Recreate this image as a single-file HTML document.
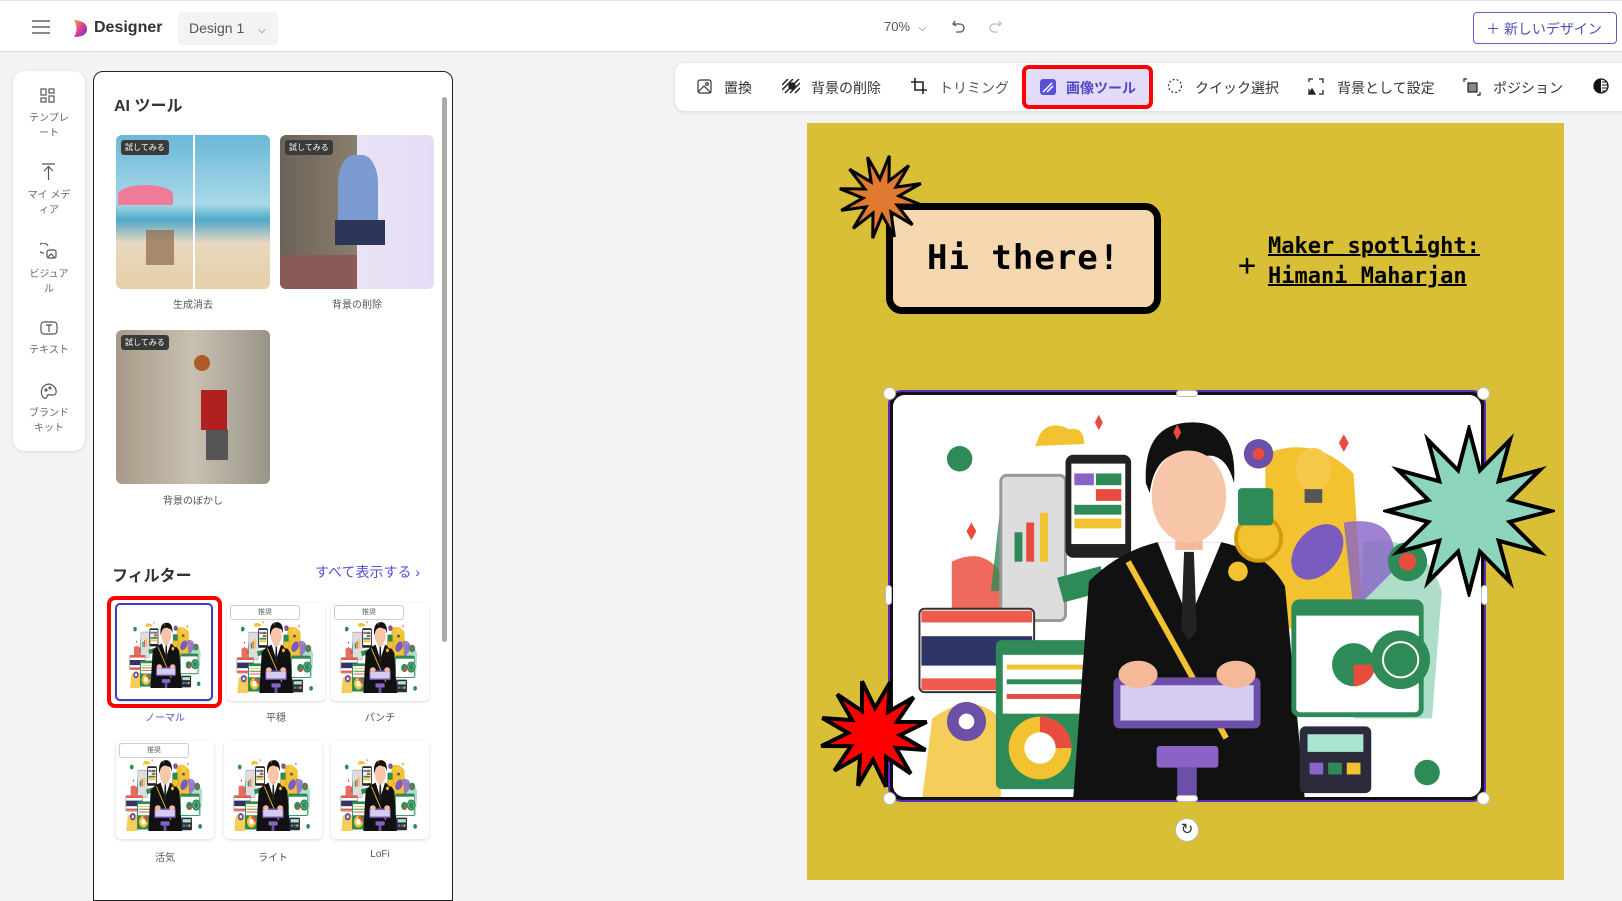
<!DOCTYPE html>
<html><head><meta charset="utf-8">
<style>
*{box-sizing:border-box;margin:0;padding:0}
body{width:1622px;height:896px;overflow:hidden;background:#f3f3f3;font-family:"Liberation Sans","Noto Sans CJK JP",sans-serif;position:relative;color:#333}
.abs{position:absolute}
#top{left:0;top:0;width:1622px;height:52px;background:#fff;border-bottom:1px solid #ddd;border-top:1px solid #e6e6e6}
.tb{position:absolute;top:63px;left:675px;width:960px;height:48px;background:#fff;border-radius:10px;box-shadow:0 1px 4px rgba(0,0,0,.12)}
.ti{position:absolute;top:78px;font-size:14px;color:#333;white-space:nowrap}
.side{left:13px;top:71px;width:72px;height:380px;background:#fff;border-radius:12px;box-shadow:0 1px 4px rgba(0,0,0,.1)}
.sl{position:absolute;width:72px;text-align:center;font-size:10px;color:#666;line-height:15px}
.panel{left:93px;top:71px;width:360px;height:830px;background:#fff;border:1px solid #222;border-radius:10px 10px 0 0}
.thumb{position:absolute;border-radius:6px;overflow:hidden}
.tag{position:absolute;left:5px;top:5px;background:#3a3a3a;color:#fff;font-size:8px;padding:2px 4px;border-radius:3px}
.cap{position:absolute;font-size:10px;color:#555;text-align:center}
.ft{position:absolute;width:98px;height:98px;background:#fff;border-radius:5px;box-shadow:0 1px 3px rgba(0,0,0,.15);overflow:hidden}
.rec{position:absolute;left:3px;top:2px;width:70px;height:15px;background:#fff;border:1px solid #ccc;border-radius:3px;font-size:7px;text-align:center;color:#666;line-height:13px;z-index:2}
.mono{font-family:"DejaVu Sans Mono","Liberation Mono",monospace;font-weight:bold;color:#000}
.h{position:absolute;width:13px;height:13px;border-radius:50%;background:#fff;border:1px solid #bbb}
</style></head><body>
<svg width="0" height="0" style="position:absolute">
<defs>
<symbol id="ill" viewBox="0 0 600 410" preserveAspectRatio="none">
<rect width="600" height="410" fill="#fff"/>
<path d="M380 60 Q430 40 470 80 L480 240 Q420 260 380 220Z" fill="#f2c230"/>
<path d="M60 170 Q100 150 120 200 L130 260 L60 260Z" fill="#ee6a5c"/>
<path d="M110 110 Q150 90 170 130 L160 200 L100 200Z" fill="#2e8b57" opacity=".8"/>
<path d="M480 150 Q540 140 560 200 L550 330 L470 330Z" fill="#8bd0b4" opacity=".7"/>
<path d="M460 130 Q520 120 510 180 L470 220Z" fill="#8a63c7" opacity=".8"/>
<path d="M40 330 Q80 300 110 330 L110 410 L30 410Z" fill="#f2c230" opacity=".8"/>
<rect x="110" y="82" width="66" height="148" rx="6" fill="#ddd" stroke="#999" stroke-width="3"/>
<rect x="124" y="140" width="8" height="30" fill="#2e8b57"/><rect x="136" y="130" width="8" height="40" fill="#e74c3c"/><rect x="150" y="120" width="8" height="50" fill="#f2c230"/>
<rect x="176" y="61" width="67" height="105" rx="8" fill="#222"/>
<rect x="182" y="70" width="55" height="82" fill="#fff"/>
<rect x="185" y="80" width="20" height="12" fill="#8a63c7"/><rect x="207" y="80" width="26" height="12" fill="#2e8b57"/><rect x="207" y="96" width="26" height="12" fill="#e74c3c"/><rect x="185" y="112" width="48" height="10" fill="#2e8b57"/><rect x="185" y="126" width="48" height="10" fill="#f2c230"/>
<rect x="170" y="180" width="46" height="26" fill="#2e8b57" transform="rotate(-15 193 193)"/>
<rect x="27" y="218" width="117" height="85" rx="5" fill="#fff" stroke="#333" stroke-width="2"/>
<rect x="29" y="220" width="113" height="12" fill="#ee5a4c"/><rect x="29" y="246" width="113" height="30" fill="#2d3566"/><rect x="29" y="289" width="113" height="12" fill="#ee5a4c"/>
<rect x="105" y="250" width="106" height="152" rx="6" fill="#2e8b57"/>
<rect x="112" y="265" width="92" height="60" fill="#fff"/>
<rect x="116" y="275" width="84" height="5" fill="#f2c230"/><rect x="116" y="290" width="84" height="5" fill="#2e8b57"/><rect x="116" y="305" width="84" height="5" fill="#e74c3c"/>
<circle cx="150" cy="360" r="32" fill="#f2c230"/><path d="M150 360 L150 328 A32 32 0 0 1 182 360Z" fill="#e74c3c"/><circle cx="150" cy="360" r="16" fill="#fff"/>
<circle cx="75" cy="333" r="20" fill="#6b4fa8"/><circle cx="75" cy="333" r="8" fill="#fff"/>
<circle cx="68" cy="65" r="13" fill="#2e8b57"/><circle cx="490" cy="300" r="8" fill="#e74c3c"/>
<path d="M150 40 Q160 25 180 35 Q195 32 195 50 L145 52Z" fill="#f2c230"/>
<path d="M184 410 L200 190 Q230 160 270 150 L335 150 Q380 160 400 195 L420 410Z" fill="#111"/>
<path d="M270 150 L302 230 L335 150Z" fill="#fff"/>
<path d="M297 160 L307 160 L310 240 L302 250 L294 240Z" fill="#222"/>
<rect x="288" y="130" width="28" height="28" fill="#f4b998"/>
<ellipse cx="302" cy="103" rx="38" ry="48" fill="#f7c5a8"/>
<path d="M258 90 Q255 30 302 28 Q352 25 348 90 Q340 60 320 62 Q300 50 278 65 Q265 75 262 100Z" fill="#111"/>
<circle cx="352" cy="180" r="10" fill="#f2c230"/>
<path d="M240 170 L340 350" stroke="#f2c230" stroke-width="6"/>
<rect x="225" y="288" width="150" height="52" rx="6" fill="#6b4fa8"/>
<rect x="232" y="296" width="136" height="36" fill="#d6ccf2"/>
<ellipse cx="250" cy="285" rx="20" ry="14" fill="#f4b998"/><ellipse cx="350" cy="285" rx="20" ry="14" fill="#f4b998"/>
<rect x="269" y="358" width="63" height="22" rx="3" fill="#8a63c7"/><rect x="290" y="380" width="20" height="30" fill="#6b4fa8"/>
<circle cx="373" cy="146" r="23" fill="#f2c230" stroke="#d89b10" stroke-width="4"/>
<ellipse cx="429" cy="76" rx="18" ry="22" fill="#f7c948"/><rect x="420" y="96" width="18" height="14" fill="#555"/>
<ellipse cx="433" cy="160" rx="22" ry="32" fill="#7a5cc0" transform="rotate(40 433 160)"/>
<circle cx="373" cy="60" r="15" fill="#6b4fa8"/><circle cx="373" cy="60" r="6" fill="#e74c3c"/>
<rect x="352" y="95" width="36" height="38" rx="4" fill="#2e8b57"/>
<rect x="409" y="211" width="130" height="115" rx="6" fill="#fff" stroke="#2e8b57" stroke-width="5"/>
<rect x="409" y="211" width="130" height="14" fill="#2e8b57"/>
<circle cx="470" cy="275" r="22" fill="#2e8b57"/><path d="M470 275 L492 275 A22 22 0 0 1 470 297Z" fill="#e74c3c"/>
<circle cx="518" cy="270" r="30" fill="#2e8b57"/><circle cx="518" cy="270" r="18" fill="#2e8b57" stroke="#fff" stroke-width="2"/>
<rect x="415" y="338" width="73" height="68" rx="6" fill="#2a2a3a"/><rect x="423" y="346" width="57" height="18" fill="#a8e6d0"/>
<rect x="425" y="375" width="14" height="12" fill="#8a63c7"/><rect x="444" y="375" width="14" height="12" fill="#2e8b57"/><rect x="463" y="375" width="14" height="12" fill="#f2c230"/>
<circle cx="525" cy="170" r="20" fill="#2e8b57"/><circle cx="525" cy="170" r="9" fill="#e74c3c"/>
<circle cx="545" cy="385" r="13" fill="#2e8b57"/>
<path d="M290 30 l4 8 l-4 8 l-4 -8Z M460 40 l5 9 l-5 9 l-5 -9Z M210 20 l4 8 l-4 8 l-4 -8Z M80 130 l5 9 l-5 9 l-5 -9Z" fill="#e74c3c"/>
</symbol>
</defs></svg>

<div id="top" class="abs">
<svg class="abs" style="left:32px;top:19px" width="18" height="14"><path d="M0 1h18M0 7h18M0 13h18" stroke="#444" stroke-width="1.3"/></svg>
<svg class="abs" style="left:73px;top:18px" width="15" height="19" viewBox="0 0 15 19"><defs><linearGradient id="lg" x1="0" y1="0" x2="1" y2="1"><stop offset="0" stop-color="#f7a04b"/><stop offset=".5" stop-color="#e0408a"/><stop offset="1" stop-color="#4a3ad9"/></linearGradient></defs><path d="M1 1 Q14 2 14 10 Q14 18 1 18 Q6 10 1 1Z" fill="url(#lg)"/></svg>
<div class="abs" style="left:94px;top:18px;font-size:16px;font-weight:bold;color:#333">Designer</div>
<div class="abs" style="left:178px;top:11px;width:100px;height:33px;background:#f3f3f3;border-radius:4px;font-size:14px;color:#555;padding:8px 0 0 11px">Design 1 <span style="margin-left:10px;font-size:10px">⌵</span></div>
<div class="abs" style="left:884px;top:18px;font-size:13px;color:#555">70% <span style="font-size:10px;margin-left:5px">⌵</span></div>
<svg class="abs" style="left:951px;top:18px" width="16" height="16" viewBox="0 0 16 16"><path d="M4 2 L2 5 L5 7 M2 5 H9 A4 4 0 0 1 9 13 H5" fill="none" stroke="#555" stroke-width="1.3"/></svg>
<svg class="abs" style="left:987px;top:18px" width="16" height="16" viewBox="0 0 16 16"><path d="M12 2 L14 5 L11 7 M14 5 H7 A4 4 0 0 0 7 13 H11" fill="none" stroke="#bbb" stroke-width="1.3"/></svg>
<div class="abs" style="left:1473px;top:11px;width:144px;height:32px;border:1px solid #5b5fc7;border-radius:4px;color:#4f52b2;font-size:14px;padding:6px 0 0 12px">＋ 新しいデザイン</div>
</div>

<div class="side abs">
<svg class="abs" style="left:27px;top:17px" width="16" height="16" viewBox="0 0 16 16" fill="none" stroke="#555" stroke-width="1.2"><rect x="1" y="1" width="5" height="6"/><rect x="9" y="1" width="5" height="4"/><rect x="1" y="10" width="5" height="4"/><rect x="9" y="8" width="5" height="6"/></svg>
<div class="sl" style="top:40px">テンプレ<br>ート</div>
<svg class="abs" style="left:28px;top:92px" width="15" height="17" viewBox="0 0 15 17" fill="none" stroke="#555" stroke-width="1.2"><path d="M1 1h13M7.5 4v13M3 8l4.5-4.5L12 8"/></svg>
<div class="sl" style="top:117px">マイ メデ<br>ィア</div>
<svg class="abs" style="left:27px;top:172px" width="18" height="17" viewBox="0 0 18 17" fill="none" stroke="#555" stroke-width="1.2"><path d="M8 3 A5 5 0 1 0 4 10"/><rect x="7" y="7" width="9" height="8" rx="2"/><path d="M8 14l3-3 4 4"/></svg>
<div class="sl" style="top:196px">ビジュア<br>ル</div>
<svg class="abs" style="left:27px;top:250px" width="18" height="14" viewBox="0 0 18 14" fill="none" stroke="#555" stroke-width="1.2"><rect x="1" y="1" width="16" height="12" rx="3"/><path d="M6 4h6M9 4v7"/></svg>
<div class="sl" style="top:272px">テキスト</div>
<svg class="abs" style="left:27px;top:312px" width="18" height="18" viewBox="0 0 18 18" fill="none" stroke="#555" stroke-width="1.2"><path d="M9 1 A8 8 0 0 0 4 15 Q7 16 7 13 Q8 11 11 12 Q17 13 16 7 A8 8 0 0 0 9 1Z"/><circle cx="6" cy="7" r="1"/><circle cx="10" cy="5" r="1"/></svg>
<div class="sl" style="top:335px">ブランド<br>キット</div>
</div>

<div class="panel abs">
<div class="abs" style="left:20px;top:20px;font-size:16px;font-weight:bold;color:#333">AI ツール</div>
<div class="abs" style="right:5px;top:25px;width:5px;height:545px;background:#aaa;border-radius:3px"></div>
<div class="thumb" style="left:22px;top:63px;width:154px;height:154px;background:linear-gradient(180deg,#6bb8d8 0%,#a8d8e8 45%,#4fa8c8 55%,#e8d8c0 70%,#e6cfa8 100%)">
<div class="abs" style="left:77px;top:0;width:2px;height:154px;background:#fff"></div>
<div class="abs" style="left:2px;top:50px;width:55px;height:20px;background:#ee7b98;border-radius:50% 50% 0 0"></div>
<div class="abs" style="left:30px;top:95px;width:28px;height:35px;background:#8b6a4a;opacity:.7"></div>
<div class="tag">試してみる</div></div>
<div class="cap" style="left:22px;top:224px;width:154px">生成消去</div>
<div class="thumb" style="left:186px;top:63px;width:154px;height:154px;background:linear-gradient(90deg,#6b6257 0%,#8a7e6e 50%,#e8e4f4 50%,#e6dcf6 100%)">
<div class="abs" style="left:58px;top:20px;width:40px;height:70px;background:#7b9bd0;border-radius:40% 40% 10% 10%"></div>
<div class="abs" style="left:55px;top:85px;width:50px;height:25px;background:#2b3558"></div>
<div class="abs" style="left:0;top:120px;width:77px;height:34px;background:#8a5a58"></div>
<div class="tag">試してみる</div></div>
<div class="cap" style="left:186px;top:224px;width:154px">背景の削除</div>
<div class="thumb" style="left:22px;top:258px;width:154px;height:154px;background:linear-gradient(90deg,#a89a88,#c8c0b0 50%,#9a9488)">
<div class="abs" style="left:85px;top:60px;width:26px;height:40px;background:#b02020"></div>
<div class="abs" style="left:78px;top:25px;width:16px;height:16px;border-radius:50%;background:#b05a2a"></div>
<div class="abs" style="left:90px;top:100px;width:22px;height:30px;background:#555"></div>
<div class="tag">試してみる</div></div>
<div class="cap" style="left:22px;top:420px;width:154px">背景のぼかし</div>
<div class="abs" style="left:18px;top:490px;font-size:16px;font-weight:bold;color:#333">フィルター</div>
<div class="abs" style="left:221px;top:490px;font-size:14px;color:#4f52d2">すべて表示する ›</div>
</div>

<div class="ft" style="left:115px;top:603px;border:2px solid #3b3fbf"><svg width="94" height="94" style="margin:1px"><use href="#ill" x="8" y="12" width="80" height="70"/></svg></div>
<div class="abs" style="left:107px;top:596px;width:115px;height:112px;border:4px solid #f00;border-radius:8px"></div>
<div class="ft" style="left:227px;top:603px"><div class="rec">推奨</div><svg width="98" height="98"><use href="#ill" x="6" y="14" width="86" height="76"/></svg></div>
<div class="ft" style="left:331px;top:603px"><div class="rec">推奨</div><svg width="98" height="98"><use href="#ill" x="6" y="14" width="86" height="76"/></svg></div>
<div class="cap" style="left:115px;top:709px;width:100px;color:#4f52d2">ノーマル</div>
<div class="cap" style="left:227px;top:709px;width:98px">平穏</div>
<div class="cap" style="left:331px;top:709px;width:98px">パンチ</div>
<div class="ft" style="left:116px;top:741px"><div class="rec">推奨</div><svg width="98" height="98"><use href="#ill" x="6" y="14" width="86" height="76"/></svg></div>
<div class="ft" style="left:224px;top:741px"><svg width="98" height="98"><use href="#ill" x="6" y="14" width="86" height="76"/></svg></div>
<div class="ft" style="left:331px;top:741px"><svg width="98" height="98"><use href="#ill" x="6" y="14" width="86" height="76"/></svg></div>
<div class="cap" style="left:116px;top:849px;width:98px">活気</div>
<div class="cap" style="left:224px;top:849px;width:98px">ライト</div>
<div class="cap" style="left:331px;top:849px;width:98px">LoFi</div>

<div class="tb"></div>
<div class="abs" style="left:1022px;top:65px;width:131px;height:44px;border:4px solid #f00;border-radius:7px;background:#e2dcf8"></div>
<svg class="abs" style="left:697px;top:79px" width="15" height="15" viewBox="0 0 15 15" fill="none" stroke="#333" stroke-width="1.2"><rect x="1" y="1" width="13" height="13" rx="2"/><circle cx="10" cy="5" r="1.3"/><path d="M1 13 L7 7 L14 14"/></svg>
<div class="ti" style="left:724px">置換</div>
<svg class="abs" style="left:782px;top:79px" width="18" height="15" viewBox="0 0 18 15" stroke="#222" stroke-width="1.5"><path d="M0 6 L6 0 M0 11 L11 0 M3 14 L17 0 M8 14 L18 4 M13 14 L18 9"/><circle cx="10" cy="7" r="3" fill="#222"/></svg>
<div class="ti" style="left:811px">背景の削除</div>
<svg class="abs" style="left:911px;top:78px" width="16" height="16" viewBox="0 0 16 16" fill="none" stroke="#222" stroke-width="1.6"><path d="M4 0 V12 H16 M0 4 H12 V16"/></svg>
<div class="ti" style="left:939px;color:#555">トリミング</div>
<svg class="abs" style="left:1040px;top:79px" width="16" height="16" viewBox="0 0 16 16"><rect x="0" y="0" width="16" height="16" rx="3" fill="#5b4fd6"/><path d="M3 13 L12 4 M7 13 L13 7" stroke="#fff" stroke-width="1.5"/></svg>
<div class="ti" style="left:1066px;color:#4f46c8;font-weight:bold">画像ツール</div>
<svg class="abs" style="left:1167px;top:78px" width="17" height="17" viewBox="0 0 17 17" fill="none" stroke="#333" stroke-width="1.2" stroke-dasharray="2 2"><circle cx="8" cy="8" r="6.5"/></svg>
<div class="ti" style="left:1195px">クイック選択</div>
<svg class="abs" style="left:1308px;top:78px" width="16" height="17" viewBox="0 0 16 17" fill="none" stroke="#222" stroke-width="1.3"><path d="M1 4V1h4M11 1h4v4M15 12v4h-4M1 11v5h6"/><path d="M1 16 L4 11 L7 16Z" fill="#222"/></svg>
<div class="ti" style="left:1337px">背景として設定</div>
<svg class="abs" style="left:1463px;top:78px" width="18" height="18" viewBox="0 0 18 18" fill="none" stroke="#222" stroke-width="1.2"><path d="M1 4V1h3M14 17h3v-3"/><rect x="5" y="5" width="9" height="9" fill="#888"/></svg>
<div class="ti" style="left:1493px">ポジション</div>
<svg class="abs" style="left:1593px;top:78px" width="16" height="16" viewBox="0 0 16 16"><circle cx="8" cy="8" r="7" fill="#fff" stroke="#111" stroke-width="1.3"/><path d="M8 1 A7 7 0 0 0 8 15Z" fill="#111"/><path d="M9 4h5M9 7h6M9 10h6M9 13h4" stroke="#111"/></svg>

<div class="abs" style="left:807px;top:123px;width:757px;height:757px;background:#d9bf36"></div>
<div class="abs" style="left:886px;top:203px;width:275px;height:111px;background:#f5d8b0;border:7px solid #000;border-radius:16px"></div>
<div class="abs mono" style="left:927px;top:238px;font-size:34px;letter-spacing:1px">Hi there!</div>
<svg class="abs" style="left:836px;top:152px" width="90" height="90" viewBox="0 0 90 90"><polygon id="s1" fill="#e07a30" stroke="#000" stroke-width="3"/></svg>
<div class="abs mono" style="left:1238px;top:248px;font-size:30px;font-weight:normal">+</div>
<div class="abs mono" style="left:1268px;top:232px;font-size:22px;line-height:30px;text-decoration:underline;text-decoration-thickness:2px">Maker spotlight:<br>Himani Maharjan</div>

<div class="abs" style="left:888px;top:390px;width:598px;height:412px;background:#111;border-radius:14px;border:2px solid #5a2cc0"></div>
<div class="abs" style="left:893px;top:395px;width:588px;height:402px;border-radius:12px;overflow:hidden;background:#fff"><svg width="588" height="402"><use href="#ill" x="0" y="0" width="588" height="402"/></svg></div>
<svg class="abs" style="left:1383px;top:425px" width="172" height="172" viewBox="0 0 172 172"><polygon id="s2" fill="#8dd4bc" stroke="#000" stroke-width="4"/></svg>
<svg class="abs" style="left:816px;top:676px" width="116" height="116" viewBox="0 0 116 116"><polygon id="s3" fill="#f00" stroke="#000" stroke-width="4"/></svg>
<div class="h" style="left:883px;top:387px"></div><div class="h" style="left:1477px;top:387px"></div>
<div class="h" style="left:883px;top:792px"></div><div class="h" style="left:1477px;top:792px"></div>
<div class="abs" style="left:1176px;top:390px;width:22px;height:7px;border-radius:4px;background:#fff;border:1px solid #bbb"></div>
<div class="abs" style="left:1176px;top:795px;width:22px;height:7px;border-radius:4px;background:#fff;border:1px solid #bbb"></div>
<div class="abs" style="left:885px;top:585px;width:7px;height:20px;border-radius:4px;background:#fff;border:1px solid #bbb"></div>
<div class="abs" style="left:1481px;top:585px;width:7px;height:20px;border-radius:4px;background:#fff;border:1px solid #bbb"></div>
<div class="abs" style="left:1175px;top:818px;width:24px;height:24px;border-radius:50%;background:#fff;border:1px solid #bbb;font-size:15px;text-align:center;line-height:22px;color:#333">↻</div>

<script>
function star(id,cx,cy,ro,ri,n,rot){var p=[];for(var i=0;i<2*n;i++){var r=i%2?ri:ro;var a=Math.PI*i/n+(rot||0);p.push((cx+r*Math.sin(a)).toFixed(1)+","+(cy-r*Math.cos(a)).toFixed(1));}document.getElementById(id).setAttribute("points",p.join(" "));}
star("s1",45,45,42,18,12,0.2);
star("s2",86,86,82,42,12,0);
star("s3",58,58,54,26,12,0.3);
</script>
</body></html>
